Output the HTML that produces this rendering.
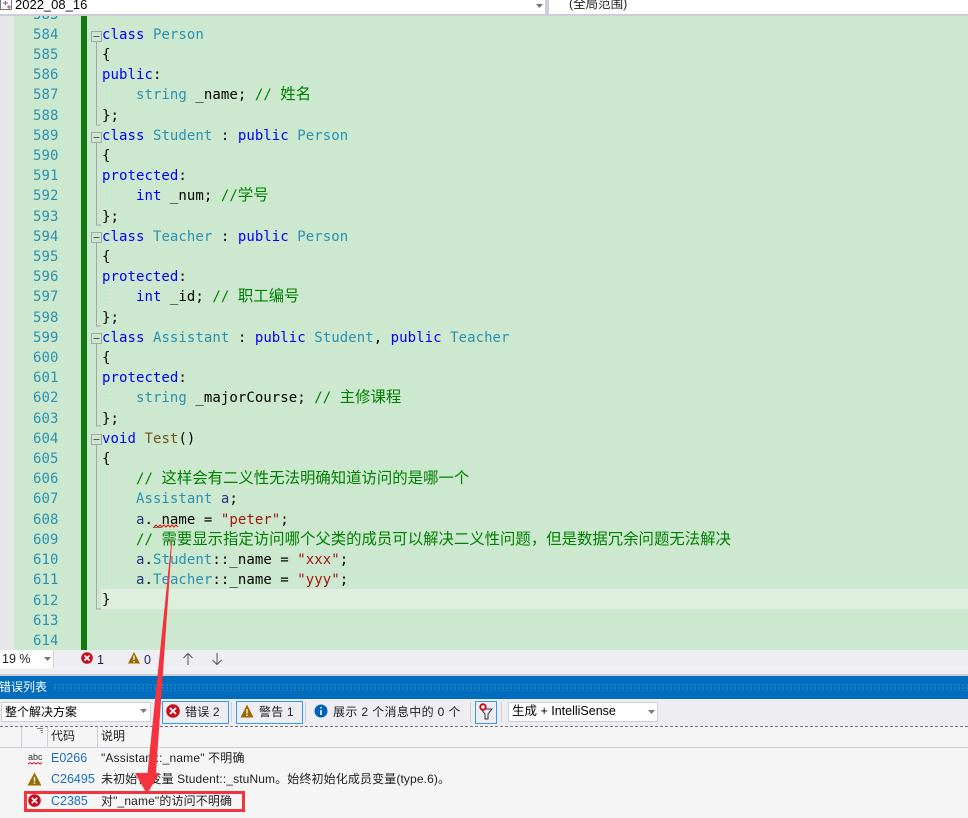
<!DOCTYPE html>
<html><head><meta charset="utf-8"><style>
html,body{margin:0;padding:0;width:968px;height:818px;overflow:hidden;background:#eeeef2}
body{position:relative;font-family:"Liberation Sans","Noto Sans CJK SC",sans-serif;font-size:13px;color:#1e1e1e}
.a{position:absolute;white-space:pre}
.b{position:absolute}
pre{position:absolute;margin:0;font-family:"DejaVu Sans Mono","Noto Sans CJK SC",monospace;font-size:14px;line-height:20.2px;letter-spacing:.06px}
pre i{font-style:normal}
.k{color:#0000ff}.t{color:#2b91af}.c{color:#008000}.s{color:#a31515}.f{color:#74531f}.v{color:#1f377f}
.z{font-family:"Noto Sans CJK SC",sans-serif;font-size:15.4px;line-height:15px;letter-spacing:0}
.sep{position:absolute;top:702px;height:20px;width:1px;background:#ccced8}
.btn{position:absolute;top:701px;height:21px;border:1px solid #3399ff;box-sizing:content-box}
</style></head><body>
<div class="b" style="left:0;top:0;width:968px;height:14px;background:#fff"></div>
<div class="b" style="left:0;top:14px;width:968px;height:2px;background:#cccedb"></div>
<div class="b" style="left:545px;top:0;width:4px;height:14px;background:#cccedb"></div>
<svg class="b" style="left:0;top:0" width="14" height="14"><path d="M0.5 0V9.5H11.5V0" fill="none" stroke="#777"/><path d="M3 3H8M5.500 1V5M7 7H11M9 5V9" stroke="#9b4f96" fill="none"/></svg>
<div class="a" style="left:15px;top:-3px;font-size:13px;line-height:16px;color:#000">2022_08_16</div>
<svg class="b" style="left:535px;top:3px" width="10" height="6"><path d="M1 1H8L4.500 5Z" fill="#777"/></svg>
<div class="a" style="left:569px;top:-4px;font-size:12.500px;line-height:16px;color:#1e1e1e">(全局范围)</div>

<div class="b" style="left:0;top:16px;width:14px;height:634px;background:#e6e7e8"></div>
<div class="b" style="left:14px;top:16px;width:954px;height:634px;background:#cce8cf"></div>
<div class="b" style="left:81px;top:16px;width:6px;height:634px;background:#107c10"></div>
<div class="b" style="left:101px;top:589px;width:867px;height:16px;background:#ddf0de;border-top:2px solid #e4ede5;border-bottom:2px solid #e4ede5"></div>

<svg class="b" style="left:88px;top:16px" width="30" height="634" fill="none">
<g stroke="#a5a5a5">
<path d="M8.500 25V109H13M8.500 126V209H13M8.500 226V310H13M8.500 327V410H13M8.500 428V593H13"/>
<g fill="#cce8cf">
<rect x="3.500" y="15.500" width="10" height="10"/><rect x="3.500" y="116.500" width="10" height="10"/><rect x="3.500" y="216.500" width="10" height="10"/><rect x="3.500" y="317.500" width="10" height="10"/><rect x="3.500" y="418.500" width="10" height="10"/>
</g>
<path d="M5.500 20.500H11.500M5.500 121.500H11.500M5.500 221.500H11.500M5.500 322.500H11.500M5.500 423.500H11.500" stroke="#555"/>
</g>
<path d="M18.500 70V90M18.500 170V190M18.500 271V291M18.500 371V391M18.500 452V572" stroke="#d5d5d5" stroke-dasharray="2 2"/>
</svg>
<div class="b" style="left:0;top:16px;width:968px;height:634px;overflow:hidden">
<pre class="t" style="left:33px;top:-11.400px">583
584
585
586
587
588
589
590
591
592
593
594
595
596
597
598
599
600
601
602
603
604
605
606
607
608
609
610
611
612
613
614</pre>
<pre style="left:102px;top:8.800px;color:#000"><i class="k">class</i> <i class="t">Person</i>
{
<i class="k">public</i>:
    <i class="t">string</i> _name; <i class="c">// <i class="z">姓名</i></i>
};
<i class="k">class</i> <i class="t">Student</i> : <i class="k">public</i> <i class="t">Person</i>
{
<i class="k">protected</i>:
    <i class="k">int</i> _num; <i class="c">//<i class="z">学号</i></i>
};
<i class="k">class</i> <i class="t">Teacher</i> : <i class="k">public</i> <i class="t">Person</i>
{
<i class="k">protected</i>:
    <i class="k">int</i> _id; <i class="c">// <i class="z">职工编号</i></i>
};
<i class="k">class</i> <i class="t">Assistant</i> : <i class="k">public</i> <i class="t">Student</i>, <i class="k">public</i> <i class="t">Teacher</i>
{
<i class="k">protected</i>:
    <i class="t">string</i> _majorCourse; <i class="c">// <i class="z">主修课程</i></i>
};
<i class="k">void</i> <i class="f">Test</i>()
{
    <i class="c">// <i class="z">这样会有二义性无法明确知道访问的是哪一个</i></i>
    <i class="t">Assistant</i> <i class="v">a</i>;
    <i class="v">a</i>._name = <i class="s">"peter"</i>;
    <i class="c">// <i class="z">需要显示指定访问哪个父类的成员可以解决二义性问题&#65292;但是数据冗余问题无法解决</i></i>
    <i class="v">a</i>.<i class="t">Student</i>::_name = <i class="s">"xxx"</i>;
    <i class="v">a</i>.<i class="t">Teacher</i>::_name = <i class="s">"yyy"</i>;
}</pre>
</div>
<svg class="b" style="left:150px;top:522px" width="50" height="8"><path d="M4 5L6 3L8 5L10 3L12 5L14 3L16 5L18 3L20 5L22 3L24 5L26 3L28 5" fill="none" stroke="#e51400"/></svg>

<!-- status bar -->
<div class="b" style="left:0;top:650px;width:53px;height:18px;background:#fff"></div>
<div class="a" style="left:2px;top:651px;font-size:12.500px;line-height:16px">19 %</div>
<svg class="b" style="left:44px;top:657px" width="9" height="5"><path d="M0 0H7L3.500 4Z" fill="#777"/></svg>
<div class="b" style="left:53px;top:650px;width:1px;height:18px;background:#ccced8"></div>
<svg class="b" style="left:81px;top:652px" width="12" height="12"><circle cx="6" cy="6" r="5.800" fill="#c50f1f"/><path d="M3.500 3.500L8.500 8.500M8.500 3.500L3.500 8.500" stroke="#fff" stroke-width="1.600"/></svg>
<div class="a" style="left:97px;top:652px;font-size:12.500px;line-height:16px;color:#1e1e5e">1</div>
<svg class="b" style="left:128px;top:652px" width="12" height="12"><path d="M6 0L12 11.500H0Z" fill="#9a6c00"/><path d="M6 3.500V8M6 9V10.500" stroke="#fff" stroke-width="1.200"/></svg>
<div class="a" style="left:144px;top:652px;font-size:12.500px;line-height:16px;color:#1e1e5e">0</div>
<svg class="b" style="left:181px;top:652px" width="14" height="14" fill="none" stroke="#555"><path d="M7 13V1.500M2.500 6L7 1.500L11.500 6"/></svg>
<svg class="b" style="left:210px;top:652px" width="14" height="14" fill="none" stroke="#555"><path d="M7 1V12.500M2.500 8L7 12.500L11.500 8"/></svg>
<div class="b" style="left:0;top:668px;width:968px;height:1px;background:#f5f5f7"></div>
<div class="b" style="left:0;top:674px;width:968px;height:2px;background:#ccced8"></div>

<!-- title -->
<div class="b" style="left:0;top:676px;width:968px;height:23px;background:#006cbe"></div>
<div class="b" style="left:54px;top:684px;width:914px;height:7px;background-image:radial-gradient(circle at 1px 1px,#2f8bd0 0.700px,transparent 1px);background-size:4px 3px"></div>
<div class="a" style="left:-1px;top:679px;font-size:12px;line-height:16px;color:#fff">错误列表</div>

<!-- toolbar -->
<div class="b" style="left:1px;top:702px;width:148px;height:18px;background:#fff;border:1px solid #ccced8"></div>
<div class="a" style="left:5px;top:704px;font-size:12px;line-height:17px;color:#000">整个解决方案</div>
<svg class="b" style="left:140px;top:709px" width="9" height="5"><path d="M0 0H7L3.500 4Z" fill="#777"/></svg>
<div class="sep" style="left:155px"></div>
<div class="btn" style="left:162px;width:65px"></div>
<svg class="b" style="left:166px;top:704px" width="14" height="14"><circle cx="7" cy="7" r="6.800" fill="#c50f1f"/><path d="M4 4L10 10M10 4L4 10" stroke="#fff" stroke-width="1.800"/></svg>
<div class="a" style="left:185px;top:704px;font-size:12px;line-height:17px;letter-spacing:.2px">错误 2</div>
<div class="sep" style="left:231px"></div>
<div class="btn" style="left:236px;width:65px"></div>
<svg class="b" style="left:240px;top:704px" width="14" height="14"><path d="M7 0.500L13.500 13.500H0.500Z" fill="#9a6c00"/><path d="M7 5V9.500M7 10.500V12" stroke="#fff" stroke-width="1.300"/></svg>
<div class="a" style="left:259px;top:704px;font-size:12px;line-height:17px;letter-spacing:.2px">警告 1</div>
<div class="sep" style="left:305px"></div>
<svg class="b" style="left:314px;top:704px" width="14" height="14"><circle cx="7" cy="7" r="6.500" fill="#005fb8"/><path d="M7 3V4.500M7 6V11" stroke="#fff" stroke-width="1.600"/></svg>
<div class="a" style="left:333px;top:704px;font-size:12px;line-height:17px;letter-spacing:.36px">展示 2 个消息中的 0 个</div>
<div class="sep" style="left:470px"></div>
<div class="btn" style="left:475px;top:701px;width:20px"></div>
<svg class="b" style="left:477px;top:703px" width="18" height="18"><path d="M4 6H15L11 11V16H8V11Z" fill="none" stroke="#333"/><circle cx="6" cy="4" r="2.700" fill="#fff" stroke="#c50f1f" stroke-width="2"/></svg>
<div class="sep" style="left:501px"></div>
<div class="b" style="left:508px;top:702px;width:148px;height:18px;background:#fff;border:1px solid #ccced8"></div>
<div class="a" style="left:512px;top:703px;font-size:12.500px;line-height:17px;color:#000">生成 + IntelliSense</div>
<svg class="b" style="left:648px;top:710px" width="9" height="5"><path d="M0 0H7L3.500 4Z" fill="#777"/></svg>

<!-- list -->
<div class="b" style="left:0;top:726px;width:968px;height:92px;background:#f5f5f5"></div>
<div class="b" style="left:0;top:726px;width:968px;height:0;border-top:1px dashed #777"></div>
<div class="b" style="left:0;top:747px;width:968px;height:1px;background:#ccced8"></div>
<div class="b" style="left:21px;top:727px;width:1px;height:20px;background:#ccced8"></div>
<div class="b" style="left:47px;top:727px;width:1px;height:20px;background:#ccced8"></div>
<div class="b" style="left:97px;top:727px;width:1px;height:20px;background:#ccced8"></div>
<svg class="b" style="left:37px;top:728px" width="7" height="7"><path d="M0 0H6V1H0ZM3 2H6V3H3ZM4 4H6V5H4Z" fill="#888"/></svg>
<div class="a" style="left:51px;top:728px;font-size:12px;line-height:17px">代码</div>
<div class="a" style="left:101px;top:728px;font-size:12px;line-height:17px">说明</div>

<div class="a" style="left:28px;top:751px;font-size:9px;line-height:12px;color:#333">abc</div>
<svg class="b" style="left:28px;top:762px" width="14" height="3"><path d="M0 2L2 0.500L4 2L6 0.500L8 2L10 0.500L12 2L14 0.500" fill="none" stroke="#c50f1f" stroke-width="0.900"/></svg>
<svg class="b" style="left:27px;top:772px" width="15" height="14"><path d="M7.500 0.500L14.500 13.500H0.500Z" fill="#9a6c00"/><path d="M7.500 5V9.500M7.500 10.500V12" stroke="#fff" stroke-width="1.300"/></svg>
<svg class="b" style="left:28px;top:794px" width="13" height="13"><circle cx="6.500" cy="6.500" r="6.300" fill="#c50f1f"/><path d="M3.800 3.800L9.200 9.200M9.200 3.800L3.800 9.200" stroke="#fff" stroke-width="1.700"/></svg>

<div class="a" style="left:51px;top:750px;font-size:12.500px;line-height:17px;color:#1a6fc4">E0266</div>
<div class="a" style="left:51px;top:771px;font-size:12.500px;line-height:17px;color:#1a6fc4">C26495</div>
<div class="a" style="left:51px;top:793px;font-size:12.500px;line-height:17px;color:#1a6fc4">C2385</div>
<div class="a" style="left:101px;top:750px;font-size:12px;line-height:17px;letter-spacing:.17px">"Assistant::_name" 不明确</div>
<div class="a" style="left:101px;top:771px;font-size:12px;line-height:17px;letter-spacing:.12px">未初始化变量 Student::_stuNum。始终初始化成员变量(type.6)。</div>
<div class="a" style="left:101px;top:793px;font-size:12px;line-height:17px;letter-spacing:.14px">对"_name"的访问不明确</div>

<!-- annotation -->
<div class="b" style="left:24px;top:791px;width:215px;height:15px;border:3px solid #f5333f"></div>
<svg class="b" style="left:0;top:0" width="968" height="818"><path d="M171.500 540L172.200 540L156 773L159.500 773L147 794L135 773L147.500 773Z" fill="#f5333f"/></svg>
</body></html>
